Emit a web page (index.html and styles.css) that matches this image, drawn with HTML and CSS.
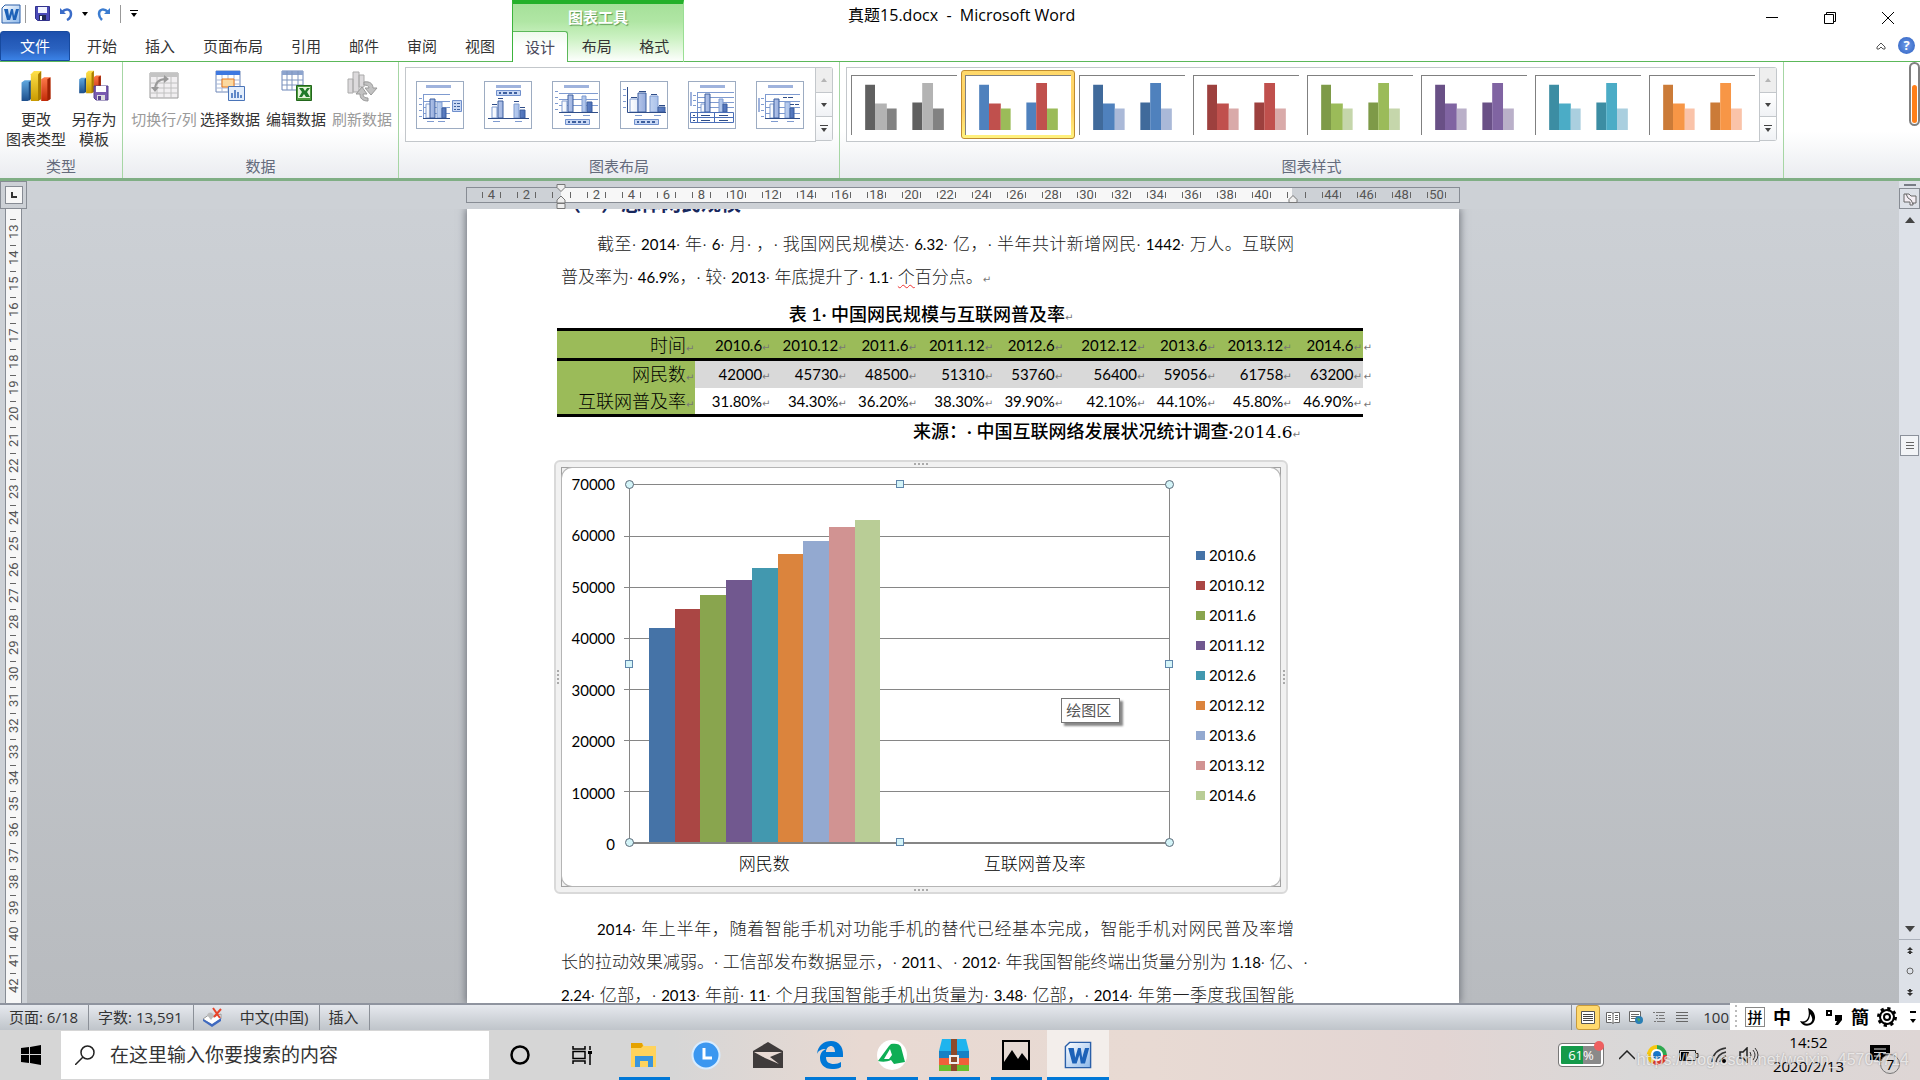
FILE: index.html
```html
<!DOCTYPE html>
<html lang="zh-CN">
<head>
  <meta charset="UTF-8">
  <meta name="viewport" content="width=device-width, initial-scale=1.0">
  <title>真题15.docx - Microsoft Word</title>
  <link rel="stylesheet" href="styles.css">
</head>
<body>

  <svg class="defs" width="0" height="0">
    <defs>
      <linearGradient id="gBlue" x2="0" y2="1"><stop offset="0" stop-color="#5fa8e0"/><stop offset="1" stop-color="#1d4f8c"/></linearGradient>
      <linearGradient id="gYellow" x2="0" y2="1"><stop offset="0" stop-color="#ffe14a"/><stop offset="1" stop-color="#c99a00"/></linearGradient>
      <linearGradient id="gRed" x2="0" y2="1"><stop offset="0" stop-color="#ff7a4a"/><stop offset="1" stop-color="#c22a08"/></linearGradient>
      <linearGradient id="gLight" x2="1"><stop offset="0" stop-color="#fff"/><stop offset="1" stop-color="#a9c1ea"/></linearGradient>
      <linearGradient id="gDark" x2="1"><stop offset="0" stop-color="#b4c5ea"/><stop offset="1" stop-color="#4a6fb8"/></linearGradient>
      <linearGradient id="gWord" x2="1" y2="1"><stop offset="0" stop-color="#fff"/><stop offset="1" stop-color="#8db8ea"/></linearGradient>
    </defs>
    <symbol id="bars" viewBox="0 0 106 60">
      <path fill="var(--a)" d="M13 9h10v46H13zM61 27h10v28H61z"/>
      <path fill="var(--b)" d="M23 28h12v27H23zM71 7h11v48H71z"/>
      <path fill="var(--c)" d="M35 33h10v22H35zM82 33h11v22H82z"/>
    </symbol>
    <symbol id="word" viewBox="0 0 20 20">
      <path d="M4 1h15v18H1V4z" fill="url(#gWord)" stroke="#2a5fa8" stroke-width="1"/>
      <path d="M3 5h4l1 7 2-7h2l1 7 2-7h3l-3 11h-3l-1-6-2 6H6z" fill="#1d62b8"/>
    </symbol>
    <symbol id="bars3d" viewBox="0 0 30 31">
      <path d="M1 12l3-2h6v18l-3 2H1z" fill="url(#gBlue)"/><path d="M8 12l2-2v18l-2 2z" fill="#1b4a80"/>
      <path d="M10 4l3-3h7v27l-3 2h-7z" fill="url(#gYellow)"/><path d="M17 4l3-3v27l-3 2z" fill="#a87c00"/>
      <path d="M20 9l3-2h6v21l-3 2h-6z" fill="url(#gRed)"/><path d="M26 9l3-2v21l-3 2z" fill="#9c2204"/>
    </symbol>
    <symbol id="legend" viewBox="0 0 25 6">
      <path d="M.5.5h24v5H.5z" fill="#c9d8f4" stroke="#6f8fcc"/><path d="M3 3h2m2 0h4m2 0h3m2 0h3" stroke="#3d5f9e" stroke-width="2"/>
    </symbol>
  </svg>

  <header class="header">
    <div class="header-left">
      <div class="quick-bar">
        <svg class="app-icon" width="20" height="20"><use href="#word"/></svg>
        <i class="quick-sep"></i>
        <button class="quick-btn" aria-label="保存"><svg width="15" height="15" viewBox="0 0 15 15"><path d="M.5.5h14v14h-12l-2-2z" fill="#4a4ab8" stroke="#32328c"/><path d="M3 1h9v6H3z" fill="#f2f4ff"/><path d="M4 9h7v5H4z" fill="#222a55"/><path d="M5 10h2v4H5z" fill="#fff"/></svg></button>
        <button class="quick-btn" aria-label="撤销"><svg width="14" height="14" viewBox="0 0 14 14"><path d="M1 1v6h6z" fill="#3b6cc8"/><path d="M3 5c4-4 9-3 9 2 0 3-2 5-4 6" fill="none" stroke="#3b6cc8" stroke-width="2.500"/></svg></button>
        <svg width="6" height="4" viewBox="0 0 6 4"><path d="M0 0h6L3 4z"/></svg>
        <button class="quick-btn" aria-label="恢复"><svg width="14" height="14" viewBox="0 0 14 14"><path d="M13 1v6H7z" fill="#3b7cd0"/><path d="M11 5C7 1 2 2 2 7c0 3 1 4 3 6" fill="none" stroke="#3b7cd0" stroke-width="2.500"/></svg></button>
        <i class="quick-sep"></i>
        <svg width="8" height="7" viewBox="0 0 8 7"><path d="M0 0h8v1H0zM1 3h6L4 7z"/></svg>
      </div>
      <nav class="tabs">
        <button class="tab file">文件</button>
        <button class="tab">开始</button>
        <button class="tab">插入</button>
        <button class="tab">页面布局</button>
        <button class="tab">引用</button>
        <button class="tab">邮件</button>
        <button class="tab">审阅</button>
        <button class="tab">视图</button>
      </nav>
    </div>
    <div class="context">
      <div class="context-title">图表工具</div>
      <div class="context-tabs">
        <button class="tab active">设计</button>
        <button class="tab">布局</button>
        <button class="tab">格式</button>
      </div>
    </div>
    <div class="header-right">
      <h1 class="title">真题15.docx&nbsp; -&nbsp; Microsoft Word</h1>
      <div class="window-side">
        <div class="window-buttons">
          <button aria-label="最小化"><svg width="12" height="12" viewBox="0 0 12 12"><path d="M0 5.500h12" stroke="#000"/></svg></button>
          <button aria-label="还原"><svg width="12" height="12" viewBox="0 0 12 12"><path d="M.5 2.500h9v9h-9zM2.500 2.500v-2h9v9h-2" fill="none" stroke="#000"/></svg></button>
          <button aria-label="关闭"><svg width="12" height="12" viewBox="0 0 12 12"><path d="M0 0l12 12M12 0L0 12" stroke="#000"/></svg></button>
        </div>
        <div class="help-buttons">
          <button aria-label="折叠功能区"><svg width="10" height="8" viewBox="0 0 10 8"><path d="M1 5l4-4 4 4v2H7L5 5 3 7H1z" fill="none" stroke="#555"/></svg></button>
          <button class="help" aria-label="帮助">?</button>
        </div>
      </div>
    </div>
  </header>

  <section class="ribbon">
    <div class="group">
      <div class="group-body">
        <button class="big"><svg width="32" height="32"><use href="#bars3d"/></svg>更改<br>图表类型</button>
        <button class="big narrow"><svg width="32" height="32" viewBox="0 0 32 32"><use href="#bars3d" width="24" height="24"/><path d="M16 16h14v14H18l-2-2z" fill="#7a5cb0" stroke="#54408c"/><path d="M18 16h10v6H18z" fill="#fff"/><path d="M19 25h8v5h-8z" fill="#ddd"/><path d="M20 26h3v4h-3z" fill="#54408c"/></svg>另存为<br>模板</button>
      </div>
      <div class="group-name">类型</div>
    </div>
    <div class="group">
      <div class="group-body">
        <button class="big" disabled><svg width="32" height="32" viewBox="0 0 32 32"><path d="M2 3h28v25H2z" fill="#f1eff1" stroke="#999"/><path d="M2 3h28v4H2z" fill="#c4c4c4"/><path d="M2 13h28M2 18h28M2 23h28M9 7v21M16 7v21M23 7v21" stroke="#c0c0c0"/><path d="M7 20C7 13 11 9 18 9" fill="none" stroke="#999" stroke-width="2"/><path d="M16 5l5 4-5 4zM3 17l4 5 4-5z" fill="#999"/></svg>切换行/列</button>
        <button class="big"><svg width="32" height="32" viewBox="0 0 32 32"><path d="M2 1h24v21H2z" fill="#fff" stroke="#6d86b8"/><path d="M2 1h24v4H2z" fill="#3e78e0"/><path d="M2 10h24M2 14h24M2 18h24M8 5v17M14 5v17M20 5v17" stroke="#a9b8d6"/><path d="M8 9h12v8H8z" fill="#fbd9a0" stroke="#e8791c" stroke-width="1"/><path d="M14.500 16.500h16v14h-16z" fill="#e3eefc" stroke="#4a74b8"/><path d="M18 23v5m3-8v8m3-6v6m3-3v3" stroke="#5f88c8" stroke-width="2"/></svg>选择数据</button>
        <button class="big"><svg width="32" height="32" viewBox="0 0 32 32"><path d="M2 1h21v19H2z" fill="#fff" stroke="#6d86b8"/><path d="M2 1h21v4H2z" fill="#8da4ce"/><path d="M2 10h21M2 15h21M7 1v19M12 1v19M18 1v19" stroke="#7f95be"/><path d="M16.500 15.500h15v15h-15z" fill="#4b9a3c" stroke="#22661c"/><path d="M18 17h12v11H18z" fill="#e6f4dc"/><path d="M19 18h4l2 3 2-3h3l-3 4 3 5h-4l-2-3-2 3h-3l3-5z" fill="#1f7a28"/></svg>编辑数据</button>
        <button class="big" disabled><svg width="32" height="32" viewBox="0 0 32 32"><path d="M2 9h5v14H2zM7 2h6v20H7zM13 5h5v12h-5z" fill="#dcdadc" stroke="#aaa"/><path d="M18 12c6-1 9 2 9 6h4l-6 7-6-7h4c0-2-2-3-5-3z" fill="#c2c2c2" stroke="#999"/><path d="M22 31c-6 0-8-3-8-7h-4l6-7 5 7h-4c0 3 2 4 5 4z" fill="#c2c2c2" stroke="#999"/></svg>刷新数据</button>
      </div>
      <div class="group-name">数据</div>
    </div>
    <div class="group">
      <div class="group-body">
        <div class="gallery layouts">
          <button class="layout" aria-label="布局 1"><svg width="46" height="46" viewBox="1 1 46 46"><path d="M10 4h25v3H10z" fill="#9fb3dd"/><path d="M7 13.500h27M7 20.500h27M7 26.500h27M7 32.500h27M7.500 13v24M3 17.500h3m-3 6h3m-3 6h3m-3 6h3M11 40.500h7m4 0h7" stroke="#7f9bd0"/><path d="M10 23h5v14h-5zM21 21h5v16h-5z" fill="url(#gLight)" stroke="#7f9bd0"/><path d="M14 18h5v19h-5zM26 27h4v10h-4z" fill="url(#gDark)" stroke="#3d5f9e"/><path d="M7 37.500h27" stroke="#2f4d88"/><path d="M36.500 19.500h9v11h-9z" fill="#c9d8f4" stroke="#6f8fcc"/><path d="M38 22.500h2m1 0h3m-6 3h2m1 0h3m-6 3h2m1 0h3" stroke="#3d5f9e"/></svg></button>
          <button class="layout" aria-label="布局 2"><svg width="46" height="46" viewBox="1 1 46 46"><path d="M12 4h25v3H12z" fill="#9fb3dd"/><use href="#legend" x="12" y="9" width="25" height="6"/><path d="M8 26h5v11H8zM30 23h5v14h-5z" fill="url(#gLight)" stroke="#7f9bd0"/><path d="M14 20h5v17h-5zM36 29h5v8h-5z" fill="url(#gDark)" stroke="#3d5f9e"/><path d="M4 37.500h41M8 23.500h5m1-6h5m11 3h5m1 6h5" stroke="#2f4d88"/><path d="M9 40.500h7m15 0h7" stroke="#7f9bd0"/></svg></button>
          <button class="layout" aria-label="布局 3"><svg width="46" height="46" viewBox="1 1 46 46"><path d="M12 4h25v3H12z" fill="#9fb3dd"/><path d="M7 12.500h39M7 18.500h39M7 24.500h39M3 10.500h3m-3 6h3m-3 6h3m-3 6h3M12 34.500h7m12 0h7" stroke="#7f9bd0"/><path d="M10 20h5v11h-5zM30 15h4v16h-4z" fill="url(#gLight)" stroke="#7f9bd0"/><path d="M16 14h5v17h-5zM35 21h5v10h-5z" fill="url(#gDark)" stroke="#3d5f9e"/><path d="M7 31.500h39" stroke="#2f4d88"/><use href="#legend" x="13" y="38" width="25" height="6"/></svg></button>
          <button class="layout" aria-label="布局 4"><svg width="46" height="46" viewBox="1 1 46 46"><path d="M3 8.500h3m-3 6h3m-3 6h3m-3 6h3M15 34.500h7m12 0h7" stroke="#7f9bd0"/><path d="M10 18h8v13h-8zM30 15h8v16h-8z" fill="url(#gLight)" stroke="#7f9bd0"/><path d="M18 12h8v19h-8zM38 26h7v5h-7z" fill="url(#gDark)" stroke="#3d5f9e"/><path d="M7.500 6v25.500H46M11 16.500h6m2-6h7m5 3h6m2 11h6" fill="none" stroke="#2f4d88"/><use href="#legend" x="14" y="38" width="25" height="6"/></svg></button>
          <button class="layout" aria-label="布局 5"><svg width="46" height="46" viewBox="1 1 46 46"><path d="M12 4h25v3H12zM2 11h2v14H2z" fill="#9fb3dd"/><path d="M9 11.500h37M9 16.500h37M9 21.500h37M9 26.500h37M9.500 11v20M5 14.500h3m-3 5h3m-3 5h3" stroke="#7f9bd0"/><path d="M13 23h4v8h-4zM31 18h4v13h-4z" fill="url(#gLight)" stroke="#7f9bd0"/><path d="M17 13h5v18h-5zM35 23h4v8h-4z" fill="url(#gDark)" stroke="#3d5f9e"/><path d="M2.500 31.500h43v10h-43zM2 36.500h44M9.500 31v10M26.500 31v10" fill="none" stroke="#4a6fb8"/><path d="M13 34.500h9m9 0h9M13 39.500h9m9 0h9M5 34.500h2m-2 5h2" stroke="#2f4d88"/></svg></button>
          <button class="layout" aria-label="布局 6"><svg width="46" height="46" viewBox="1 1 46 46"><path d="M12 4h25v3H12zM2 17h2v14H2z" fill="#9fb3dd"/><path d="M9 13.500h35M9 20.500h35M9 26.500h35M9 32.500h35M9.500 13v24M5 17.500h3m-3 6h3m-3 6h3m-3 6h3M15 40.500h7m9 0h7" stroke="#7f9bd0"/><path d="M14 23h4v14h-4zM29 21h5v16h-5z" fill="url(#gLight)" stroke="#7f9bd0"/><path d="M18 18h5v19h-5zM34 27h4v10h-4z" fill="url(#gDark)" stroke="#3d5f9e"/><path d="M9 37.500h35M27 16.500h4m1 0h5m-3 7h4m1 0h4" stroke="#2f4d88"/></svg></button>
        </div>
        <div class="gallery-scroll">
          <button disabled aria-label="上一行"><svg width="6" height="4" viewBox="0 0 6 4"><path d="M0 4h6L3 0z" fill="#b5b5b5"/></svg></button>
          <button aria-label="下一行"><svg width="6" height="4" viewBox="0 0 6 4"><path d="M0 0h6L3 4z" fill="#444"/></svg></button>
          <button aria-label="其他"><svg width="8" height="7" viewBox="0 0 8 7"><path d="M0 0h8v1H0zM1 3h6L4 7z" fill="#444"/></svg></button>
        </div>
      </div>
      <div class="group-name">图表布局</div>
    </div>
    <div class="group">
      <div class="group-body">
        <div class="gallery">
          <button class="style gray" aria-label="样式 1"><svg><use href="#bars"/></svg></button>
          <button class="style mixed selected" aria-label="样式 2"><svg><use href="#bars"/></svg></button>
          <button class="style blue" aria-label="样式 3"><svg><use href="#bars"/></svg></button>
          <button class="style red" aria-label="样式 4"><svg><use href="#bars"/></svg></button>
          <button class="style green" aria-label="样式 5"><svg><use href="#bars"/></svg></button>
          <button class="style purple" aria-label="样式 6"><svg><use href="#bars"/></svg></button>
          <button class="style teal" aria-label="样式 7"><svg><use href="#bars"/></svg></button>
          <button class="style orange" aria-label="样式 8"><svg><use href="#bars"/></svg></button>
        </div>
        <div class="gallery-scroll">
          <button disabled aria-label="上一行"><svg width="6" height="4" viewBox="0 0 6 4"><path d="M0 4h6L3 0z" fill="#b5b5b5"/></svg></button>
          <button aria-label="下一行"><svg width="6" height="4" viewBox="0 0 6 4"><path d="M0 0h6L3 4z" fill="#444"/></svg></button>
          <button aria-label="其他"><svg width="8" height="7" viewBox="0 0 8 7"><path d="M0 0h8v1H0zM1 3h6L4 7z" fill="#444"/></svg></button>
        </div>
      </div>
      <div class="group-name">图表样式</div>
    </div>
    <div class="level"><i></i></div>
  </section>

  <main class="workspace">
    <div class="ruler-corner"><button aria-label="制表符"><svg width="6" height="6" viewBox="0 0 6 6"><path d="M1 0v5h5" fill="none" stroke="#333" stroke-width="2"/></svg></button></div>
    <div class="ruler-row">
      <div class="ruler">
        <span>4</span><span>2</span><span></span><span>2</span><span>4</span><span>6</span><span>8</span><span>10</span><span>12</span><span>14</span><span>16</span><span>18</span><span>20</span><span>22</span><span>24</span><span>26</span><span>28</span><span>30</span><span>32</span><span>34</span><span>36</span><span>38</span><span>40</span><span></span><span>44</span><span>46</span><span>48</span><span>50</span>
        <svg class="indent-left" width="10" height="26" viewBox="0 0 10 26"><path d="M1 1.500h8v3l-4 4-4-4zM1 20v-3l4-4 4 4v3zM1 20.500h8v5H1z" fill="#eee" stroke="#777"/></svg>
        <svg class="indent-right" width="10" height="9" viewBox="0 0 10 9"><path d="M1 8.500v-3l4-4 4 4v3z" fill="#eee" stroke="#777"/></svg>
      </div>
    </div>
    <div class="ruler-side">
      <div class="vruler">
        <span>13</span><span>14</span><span>15</span><span>16</span><span>17</span><span>18</span><span>19</span><span>20</span><span>21</span><span>22</span><span>23</span><span>24</span><span>25</span><span>26</span><span>27</span><span>28</span><span>29</span><span>30</span><span>31</span><span>32</span><span>33</span><span>34</span><span>35</span><span>36</span><span>37</span><span>38</span><span>39</span><span>40</span><span>41</span><span>42</span>
      </div>
    </div>

    <div class="canvas">
      <article class="page">
        <h2 class="heading">（一）总体网民规模</h2>
        <p class="para">
          <span class="line first">截至· <b>2014</b>· 年· <b>6</b>· 月· ，· 我国网民规模达· <b>6.32</b>· 亿，· 半年共计新增网民· <b>1442</b>· 万人。互联网</span>
          <span class="line last">普及率为· <b>46.9%</b>，· 较· <b>2013</b>· 年底提升了· <b>1.1</b>· <u>个</u>百分点。<i class="mark"></i></span>
        </p>

        <table class="data">
          <caption>表 1· 中国网民规模与互联网普及率<i class="mark"></i></caption>
          <colgroup><col class="name"><col class="mid"><col class="mid"><col class="slim"><col class="mid"><col class="slim"><col class="wide"><col class="slim"><col class="mid"><col class="slim"><col class="tail"></colgroup>
          <thead>
            <tr><th class="mark">时间</th><th class="mark">2010.6</th><th class="mark">2010.12</th><th class="mark">2011.6</th><th class="mark">2011.12</th><th class="mark">2012.6</th><th class="mark">2012.12</th><th class="mark">2013.6</th><th class="mark">2013.12</th><th class="mark">2014.6</th><td class="mark row-end"></td></tr>
          </thead>
          <tbody>
            <tr class="shaded"><th class="mark">网民数</th><td class="mark">42000</td><td class="mark">45730</td><td class="mark">48500</td><td class="mark">51310</td><td class="mark">53760</td><td class="mark">56400</td><td class="mark">59056</td><td class="mark">61758</td><td class="mark">63200</td><td class="mark row-end"></td></tr>
            <tr><th class="mark">互联网普及率</th><td class="mark">31.80%</td><td class="mark">34.30%</td><td class="mark">36.20%</td><td class="mark">38.30%</td><td class="mark">39.90%</td><td class="mark">42.10%</td><td class="mark">44.10%</td><td class="mark">45.80%</td><td class="mark">46.90%</td><td class="mark row-end"></td></tr>
          </tbody>
        </table>
        <p class="source">来源：· 中国互联网络发展状况统计调查·<span>2014.6</span><i class="mark"></i></p>

        <div class="chart-frame">
          <i class="grip top"></i><i class="grip bottom"></i><i class="grip left"></i><i class="grip right"></i>
          <div class="chart-border">
            <div class="chart">
              <div class="axis"><span>70000</span><span>60000</span><span>50000</span><span>40000</span><span>30000</span><span>20000</span><span>10000</span><span>0</span></div>
              <div class="plot">
                <div class="gridlines"><i></i><i></i><i></i><i></i><i></i><i></i><i></i></div>
                <div class="series">
                  <div class="columns">
                    <i class="c1" style="height: 60%"></i>
                    <i class="c2" style="height: 65.300%"></i>
                    <i class="c3" style="height: 69.300%"></i>
                    <i class="c4" style="height: 73.300%"></i>
                    <i class="c5" style="height: 76.800%"></i>
                    <i class="c6" style="height: 80.600%"></i>
                    <i class="c7" style="height: 84.400%"></i>
                    <i class="c8" style="height: 88.200%"></i>
                    <i class="c9" style="height: 90.300%"></i>
                  </div>
                  <div class="columns"></div>
                </div>
                <i class="handle round n w"></i><i class="handle n"></i><i class="handle round n e"></i>
                <i class="handle w"></i><i class="handle e"></i>
                <i class="handle round s w"></i><i class="handle s"></i><i class="handle round s e"></i>
                <div class="tip">绘图区</div>
              </div>
              <ul class="legend">
                <li><i class="c1"></i>2010.6</li>
                <li><i class="c2"></i>2010.12</li>
                <li><i class="c3"></i>2011.6</li>
                <li><i class="c4"></i>2011.12</li>
                <li><i class="c5"></i>2012.6</li>
                <li><i class="c6"></i>2012.12</li>
                <li><i class="c7"></i>2013.6</li>
                <li><i class="c8"></i>2013.12</li>
                <li><i class="c9"></i>2014.6</li>
              </ul>
              <div class="categories"><span>网民数</span><span>互联网普及率</span></div>
            </div>
          </div>
        </div>

        <p class="para after">
          <span class="line first"><b>2014</b>· 年上半年，随着智能手机对功能手机的替代已经基本完成，智能手机对网民普及率增</span>
          <span class="line">长的拉动效果减弱。· 工信部发布数据显示，· <b>2011</b>、· <b>2012</b>· 年我国智能终端出货量分别为 <b>1.18</b>· 亿、·</span>
          <span class="line"><b>2.24</b>· 亿部，· <b>2013</b>· 年前· <b>11</b>· <u>个月我国</u>智能手机出货量为· <b>3.48</b>· 亿部，· <b>2014</b>· 年第一季度我国智能</span>
        </p>
      </article>
    </div>

    <div class="scrollbar">
      <i class="split"></i>
      <button class="ruler-toggle" aria-label="标尺"><svg width="14" height="14" viewBox="0 0 14 14"><path d="M1 2h5l2 2h5v7h-3v2H7v-3H1z" fill="#f4eef4" stroke="#666"/><path d="M3 2l2 4 3 2 2 4" fill="none" stroke="#666"/></svg></button>
      <button aria-label="向上"><svg width="10" height="6" viewBox="0 0 10 6"><path d="M0 6h10L5 0z" fill="#444"/></svg></button>
      <div class="track"><button class="thumb" aria-label="滑块"><svg width="8" height="7" viewBox="0 0 8 7"><path d="M0 .5h8M0 3.500h8M0 6.500h8" stroke="#666"/></svg></button></div>
      <button aria-label="向下"><svg width="10" height="6" viewBox="0 0 10 6"><path d="M0 0h10L5 6z" fill="#444"/></svg></button>
      <div class="browse">
        <button aria-label="上一页"><svg width="6" height="7" viewBox="0 0 6 7"><path d="M0 3h6L3 0zM0 6h6L3 3zM2 6h2v1H2z" fill="#333"/></svg></button>
        <button aria-label="选择浏览对象"><svg width="8" height="8" viewBox="0 0 8 8"><circle cx="4" cy="4" r="3" fill="none" stroke="#666"/></svg></button>
        <button aria-label="下一页"><svg width="6" height="7" viewBox="0 0 6 7"><path d="M0 1h6L3 4zM0 4h6L3 7zM2 0h2v1H2z" fill="#333"/></svg></button>
      </div>
    </div>
  </main>

  <footer class="status">
    <button>页面: 6/18</button>
    <button>字数: 13,591</button>
    <button class="lang"><svg width="20" height="20" viewBox="0 0 20 20"><path d="M0 12l7-5 3 3 8-3v5l-9 6z" fill="#fff" stroke="#999"/><path d="M0 12l9 5 9-6v3l-9 6-9-6z" fill="#3f6ac0"/><path d="M4 8c2-4 6-3 7 1l-3 4z" fill="#bbb"/><path d="M10 1l7 10M18 2l-7 8" stroke="#e8442a" stroke-width="2"/></svg>中文(中国)</button>
    <button>插入</button>
    <div class="views">
      <button class="on" aria-label="页面视图"><svg width="14" height="13" viewBox="0 0 14 13"><path d="M.5.500h13v12H.5z" fill="#fff" stroke="#555"/><path d="M2 3.500h10M2 5.500h10M2 7.500h10M2 9.500h10" stroke="#444"/></svg></button>
      <button aria-label="阅读版式"><svg width="14" height="13" viewBox="0 0 14 13"><path d="M.5 1.500h5l1.500 1 1.500-1h5v10h-5l-1.500 1-1.500-1h-5zM7 2v10" fill="#fff" stroke="#666"/><path d="M2 4.500h3m-3 2h3m-3 2h3m4-4h3m-3 2h3m-3 2h3" stroke="#666"/></svg></button>
      <button aria-label="Web 版式"><svg width="14" height="13" viewBox="0 0 14 13"><path d="M.5.500h11v10H.5z" fill="#fff" stroke="#666"/><path d="M2 3.500h8M2 5.500h8M2 7.500h5" stroke="#666"/><circle cx="10" cy="9" r="4" fill="#2a7fb5"/><path d="M8 7l3 1-1 3z" fill="#4caf50"/></svg></button>
      <button aria-label="大纲视图"><svg width="14" height="13" viewBox="0 0 14 13"><path d="M1 1.500h2m1 0h9M4 4.500h2m1 0h5M4 7.500h2m1 0h6M2 10.500h2m1 0h8" stroke="#777"/></svg></button>
      <button aria-label="草稿"><svg width="14" height="13" viewBox="0 0 14 13"><path d="M1 1.500h12M1 4.500h12M1 7.500h12M1 10.500h12" stroke="#666"/></svg></button>
      <span class="zoom">100</span>
    </div>
    <div class="ime">
      <i class="ime-grip"></i>
      <button class="boxed">拼</button>
      <button>中</button>
      <button aria-label="半角"><svg width="18" height="18" viewBox="0 0 18 18"><path d="M9 0c8 3 9 12 4 16-4 3-10 2-12-3 5 2 11-2 8-13z"/><path d="M11 6c3 4 3 7 0 9-2 1-4 1-6 0 4-1 6-4 6-9z" fill="#fff"/></svg></button>
      <button aria-label="标点"><svg width="18" height="18" viewBox="0 0 18 18"><path d="M2 3h4v4H2z" fill="none" stroke="#000" stroke-width="2"/><path d="M10 7h7v5l-4 5h-3l2-4h-2z"/></svg></button>
      <button>簡</button>
      <button aria-label="设置"><svg width="20" height="20" viewBox="0 0 20 20"><circle cx="10" cy="10" r="7" fill="none" stroke="#000" stroke-width="2"/><circle cx="10" cy="10" r="8" fill="none" stroke="#000" stroke-width="4" stroke-dasharray="3 3.280"/><circle cx="10" cy="10" r="3" fill="none" stroke="#000" stroke-width="2"/></svg></button>
      <button class="ime-more" aria-label="更多"><svg width="6" height="12" viewBox="0 0 6 12"><path d="M0 0h6v2H0zM0 8h6l-3 4z"/></svg></button>
    </div>
  </footer>

  <div class="taskbar">
    <button class="start" aria-label="开始"><svg width="20" height="20" viewBox="0 0 20 20"><path d="M0 3l8-1v7H0zM9 2l11-2v9H9zM0 10h8v8l-8-1zM9 10h11v10L9 18z"/></svg></button>
    <label class="search">
      <svg width="20" height="20" viewBox="0 0 20 20"><circle cx="12.500" cy="7.500" r="6.500" fill="none" stroke="#222" stroke-width="1.500"/><path d="M8 12l-8 8" stroke="#222" stroke-width="1.500"/></svg>
      <input type="text" placeholder="在这里输入你要搜索的内容" aria-label="搜索">
    </label>
    <button class="task" aria-label="Cortana"><svg width="20" height="20" viewBox="0 0 20 20"><circle cx="10" cy="10" r="8.500" fill="none" stroke="#000" stroke-width="2.500"/></svg></button>
    <button class="task" aria-label="任务视图"><svg width="20" height="20" viewBox="0 0 20 20"><path d="M1 1v3h12V1M1 19v-3h12v3M1 6.500h12v7H1zM18 1v4M18 9v11" fill="none" stroke="#000" stroke-width="1.500"/><path d="M16 6h4v3h-4z"/></svg></button>
    <button class="task open" aria-label="资源管理器"><svg width="28" height="28" viewBox="0 0 28 28"><path d="M1 2h11l2 3h12v21H1z" fill="#ffd35c"/><path d="M1 2h11l1 3-2 2H1z" fill="#e5a200"/><path d="M5 26V15h18v11h-5v-6h-8v6z" fill="#3a96dd"/></svg></button>
    <button class="task" aria-label="时钟"><svg width="30" height="30" viewBox="0 0 30 30"><circle cx="15" cy="15" r="13.500" fill="#3b97f0" stroke="#d8ecff" stroke-width="2"/><path d="M13 8v10h8" fill="none" stroke="#fff" stroke-width="3"/></svg></button>
    <button class="task" aria-label="邮件"><svg width="30" height="26" viewBox="0 0 30 26"><path d="M0 9L15 0l15 9v17H0z" fill="#3f3b3b"/><path d="M1 10h28l-12 5 9 7-14-6z" fill="#e8dad4"/></svg></button>
    <button class="task open" aria-label="Edge"><svg width="28" height="30" viewBox="0 0 28 30"><path d="M1 14C2 5 8 1 15 1c8 0 12 6 12 13v3H10c0 5 3 7 8 7 3 0 5-1 7-2v5c-3 2-6 2-9 2-8 0-12-5-12-11 0-5 3-8 6-9-5 0-8 2-9 5zm9-2h9c0-4-2-6-4-6s-5 2-5 6z" fill="#0078d7"/></svg></button>
    <button class="task open" aria-label="浏览器"><svg width="30" height="32" viewBox="0 0 30 32"><circle cx="15" cy="16" r="15" fill="#fff"/><path d="M14 5c5-1 9 0 10 3l4 15-11 2-3-4c-4 2-9 2-13 1L12 7z" fill="#0fae55"/><path d="M13 10L7 20h5l3-4z" fill="#fff"/></svg></button>
    <button class="task open" aria-label="压缩"><svg width="30" height="32" viewBox="0 0 30 32"><path d="M3 0h24l3 12H0z" fill="#1fb4ee"/><path d="M0 12h30v8H0z" fill="#1681c4"/><path d="M0 19h30v7H0z" fill="#f0603a"/><path d="M0 26h30v6H0z" fill="#6abf2e"/><path d="M12 0h6v32h-6z" fill="#8d4a2a"/><path d="M11 17h8v7h-8z" fill="none" stroke="#eee" stroke-width="2"/></svg></button>
    <button class="task open" aria-label="照片"><svg width="28" height="30" viewBox="0 0 28 30"><path d="M1 1h26v28H1z" fill="#e5d9d2" stroke="#000" stroke-width="2"/><path d="M2 22l8-12 6 9 4-6 7 9v7H2z"/></svg></button>
    <button class="task open current" aria-label="Word"><svg width="28" height="30"><use href="#word"/></svg></button>

    <div class="tray">
      <div class="power"><span>61%</span><i></i></div>
      <svg width="16" height="10" viewBox="0 0 16 10"><path d="M0 9l8-8 8 8" fill="none" stroke="#222" stroke-width="1.500"/></svg>
      <svg width="20" height="20" viewBox="0 0 20 20"><circle cx="10" cy="10" r="9.500" fill="#fff"/><path d="M10 2a8 8 0 0 1 8 8" fill="none" stroke="#2fa84f" stroke-width="4"/><path d="M18 10a8 8 0 0 1-12 7" fill="none" stroke="#e33b2e" stroke-width="4"/><path d="M6 17A8 8 0 0 1 10 2" fill="none" stroke="#f9c80e" stroke-width="4"/><circle cx="10" cy="10" r="4" fill="#1877c9"/></svg>
      <svg width="20" height="13" viewBox="0 0 20 13"><path d="M.5 1.500h16v10H.5zM17 4.500h2v4h-2" fill="none" stroke="#222"/><path d="M2 3h8l-3 8H2z"/></svg>
      <svg width="16" height="16" viewBox="0 0 16 16"><path d="M1 15C2 7 7 2 15 1M5 15c1-5 5-9 10-10M9 15c1-3 3-5 6-6" fill="none" stroke="#333" stroke-width="1.500"/><circle cx="13" cy="14" r="2"/></svg>
      <svg width="20" height="16" viewBox="0 0 20 16"><path d="M1 5h3l4-4v14l-4-4H1z" fill="none" stroke="#222" stroke-width="1.500"/><path d="M11 5q2 3 0 6M14 3q4 5 0 10M16 1q6 7 0 14" fill="none" stroke="#333"/></svg>
      <div class="clock"><span>14:52</span><span>2020/2/13</span></div>
      <div class="notice"><svg width="20" height="20" viewBox="0 0 20 20"><path d="M0 0h20v15h-7v5l-5-5H0z"/><path d="M4 4h12M4 7.500h12M4 11h7" stroke="#ddd"/></svg><span>7</span></div>
    </div>
    <div class="watermark">https://blog.csdn.net/weixin_45704714</div>
  </div>

</body>
</html>
```
FILE: styles.css
```css
* {
  box-sizing: border-box;
  margin: 0;
  padding: 0;
}

:root {
  --ui: "Open Sans", "Noto Sans CJK SC", sans-serif;
  --doc: Lato, "Noto Sans CJK SC", sans-serif;
  --page: 992px;
}

body {
  display: flex;
  flex-direction: column;
  height: 100vh;
  overflow: hidden;
  font-family: var(--ui);
  font-size: 15px;
  color: #333;
  background: #fff;
}

button {
  font: inherit;
  color: inherit;
  background: none;
  border: none;
}

i, u {
  font-style: normal;
}

svg {
  display: block;
  flex: none;
}

.defs {
  position: absolute;
}

/* title bar and tabs */
.header {
  display: flex;
  height: 62px;
  border-bottom: 1px solid #5cb85a;
}

.header-left {
  display: flex;
  flex-direction: column;
  justify-content: space-between;
}

.quick-bar {
  display: flex;
  align-items: center;
  gap: 9px;
  height: 27px;
  padding-left: 1px;
}

.quick-btn {
  display: flex;
}

.quick-sep {
  width: 1px;
  height: 18px;
  background: #999;
}

.quick-sep:nth-child(2) {
  margin-left: -5px;
}

.tabs, .context-tabs {
  display: flex;
  height: 30px;
}

.tab {
  padding: 0 14px;
  line-height: 30px;
  white-space: nowrap;
}

.file {
  width: 70px;
  margin-right: 3px;
  color: #fff;
  background: linear-gradient(#1d50ad, #2a62c0 60%, #3b82e6);
  border: 1px solid #174a9f;
  border-radius: 3px 3px 0 0;
  line-height: 28px;
}

.context {
  display: flex;
  flex-direction: column;
  margin-left: 3px;
  width: 172px;
  height: 62px;
  background: linear-gradient(#a6e09a, #b0e6a4 30%, #cdf2c4 60%, #fff);
  border-top: 4px solid #24b02a;
  border-left: 1px solid #3cb43c;
  border-right: 1px solid #9adf94;
}

.context-title {
  height: 27px;
  line-height: 27px;
  text-align: center;
  color: #fff;
  font-weight: 700;
  text-shadow: 1px 1px 1px #5a9a52;
}

.context-tabs {
  height: 31px;
  border-bottom: 1px solid #5cb85a;
}

.context .tab {
  flex: 1;
  padding: 0;
}

.context .active {
  flex: none;
  width: 55px;
  height: 31px;
  color: #4a4a5c;
  background: linear-gradient(#eefaec, #fff 50%);
  border: 1px solid #5cb85a;
  border-bottom: none;
  border-left: none;
  border-radius: 0 3px 0 0;
}

.header-right {
  display: flex;
  flex: 1;
  justify-content: space-between;
}

.title {
  padding: 4px 0 0 164px;
  font-size: 16px;
  font-weight: 400;
  line-height: 22px;
  color: #000;
}

.window-side {
  display: flex;
  flex-direction: column;
  justify-content: space-between;
  align-items: flex-end;
}

.window-buttons {
  display: flex;
  gap: 46px;
  padding: 12px 26px 0 0;
}

.help-buttons {
  display: flex;
  align-items: center;
  gap: 12px;
  padding: 0 5px 7px 0;
}

.help {
  width: 17px;
  height: 17px;
  border-radius: 50%;
  background: radial-gradient(#6f9be8, #2c5fc0);
  color: #fff;
  font-size: 13px;
  font-weight: 700;
  line-height: 17px;
}

/* ribbon */
.ribbon {
  position: relative;
  display: flex;
  height: 119px;
  background: linear-gradient(#fff 60%, #eaecf0);
  border-bottom: 3px solid #7fae84;
}

.group {
  display: flex;
  flex-direction: column;
  justify-content: space-between;
  padding: 5px 6px 2px;
  border-right: 1px solid #a6d6a4;
}

.group:first-child, .group:nth-child(2) {
  padding: 5px 3px 2px;
}

.group-body {
  display: flex;
  height: 86px;
}

.group-name {
  text-align: center;
  line-height: 20px;
  color: #646b7c;
}

.big {
  display: flex;
  flex-direction: column;
  align-items: center;
  width: 66px;
  padding-top: 3px;
  line-height: 20px;
  white-space: nowrap;
}

.big svg {
  margin-bottom: 7px;
}

.big:disabled {
  color: #9a9a9a;
}

.narrow {
  width: 50px;
}

.group:nth-child(2) .group-body {
  padding: 0 0 0 5px;
}

.gallery {
  display: flex;
  align-items: center;
  height: 75px;
  background: #fff;
  border: 1px solid #c3c7cb;
}

.layouts {
  gap: 20px;
  padding: 0 11px 0 10px;
}

.layout {
  width: 48px;
  height: 48px;
  border: 1px solid #9dacc2;
}

.gallery-scroll {
  display: grid;
  grid-template-rows: 1fr 1fr 1fr;
  width: 17px;
  height: 74px;
  border: 1px solid #c3c7cb;
  border-left: none;
  border-radius: 0 3px 3px 0;
}

.gallery-scroll button {
  display: flex;
  justify-content: center;
  align-items: center;
  background: linear-gradient(#fff, #f0f2f5);
}

.gallery-scroll button + button {
  border-top: 1px solid #c3c7cb;
}

.gallery-scroll button:disabled {
  background: #eee;
}

.style {
  width: 114px;
  height: 69px;
  padding: 4px;
  border-radius: 3px;
}

.style svg {
  width: 106px;
  height: 60px;
  background: #fff;
  border-top: 1px solid #808080;
  border-left: 1px solid #808080;
}

.selected {
  background: linear-gradient(#ffd96a, #ffd065 60%, #fff27e);
  border: 1px solid #c08c30;
  padding: 3px;
}

.gray { --a: #606060; --b: #b3b3b3; --c: #828282; }
.mixed { --a: #4f81bd; --b: #c0504d; --c: #9bbb59; }
.blue { --a: #406a9b; --b: #4f81bd; --c: #aab9d8; }
.red { --a: #9d403e; --b: #c0504d; --c: #d9aaa9; }
.green { --a: #7e9a48; --b: #9bbb59; --c: #c5d6ab; }
.purple { --a: #695086; --b: #8064a2; --c: #bab0c9; }
.teal { --a: #3c8da3; --b: #4bacc6; --c: #aacfdf; }
.orange { --a: #cb7b38; --b: #f79646; --c: #fac3a9; }

.level {
  position: absolute;
  right: 0;
  top: 0;
  display: flex;
  align-items: flex-end;
  width: 11px;
  height: 64px;
  padding: 1px;
  background: #fff;
  border: 2px solid #808080;
  border-radius: 6px;
}

.level i {
  width: 5px;
  height: 38px;
  border-radius: 3px;
  background: #ff7f1a;
}

/* document area */
.workspace {
  display: grid;
  flex: 1;
  grid-template-columns: 27px minmax(0, 1fr) 21px;
  grid-template-rows: 28px minmax(0, 1fr);
  min-height: 0;
  background: linear-gradient(#cdd1d6, #b8bbbf);
}

.ruler-corner {
  display: flex;
  justify-content: center;
  align-items: center;
  border: 1px solid #878c94;
}

.ruler-corner button {
  display: flex;
  justify-content: center;
  align-items: center;
  width: 18px;
  height: 18px;
  background: #f7f7f7;
  border: 1px solid #878c94;
}

.ruler-row {
  background: #cdd1d6;
}

.ruler {
  position: relative;
  z-index: 1;
  display: flex;
  width: calc(var(--page) + 2px);
  height: 16px;
  margin: 6px auto;
  padding-left: 7px;
  font-family: Roboto, sans-serif;
  font-size: 13px;
  line-height: 14px;
  color: #555;
  background: linear-gradient(to right, transparent 94px, #f7f7f7 94px calc(100% - 167px), transparent calc(100% - 167px));
  border: 1px solid #878c94;
}

.ruler span {
  width: 35px;
  text-align: center;
  background: linear-gradient(#666, #666) 8px 4px / 1px 6px no-repeat, linear-gradient(#666, #666) 26px 4px / 1px 6px no-repeat;
}

.indent-left {
  position: absolute;
  left: 89px;
  top: -5px;
}

.indent-right {
  position: absolute;
  right: 161px;
  bottom: -1px;
}

.ruler-side {
  padding-left: 5px;
  background: #cdd1d6;
  overflow: hidden;
}

.vruler {
  display: flex;
  flex-direction: column;
  align-items: center;
  width: 17px;
  min-height: 100%;
  padding-top: 10px;
  background: #f7f7f7;
  border: solid #878c94;
  border-width: 0 1px;
}

.vruler span {
  flex: none;
  height: 26px;
  width: 15px;
  writing-mode: vertical-rl;
  transform: rotate(180deg);
  text-align: center;
  font-family: Roboto, sans-serif;
  font-size: 13px;
  line-height: 15px;
  color: #555;
  background: linear-gradient(#666, #666) 5px 25px / 6px 1px no-repeat;
}

.canvas {
  overflow: hidden;
}

.page {
  display: flow-root;
  width: var(--page);
  height: 100%;
  margin: 0 auto;
  padding: 0 165px 0 94px;
  background: #fff;
  box-shadow: 0 0 8px 1px #6c7078;
  font-family: var(--doc);
  color: #000;
  text-spacing-trim: space-all;
}

.heading {
  margin-top: -16px;
  font-size: 20px;
  line-height: 20px;
  color: #17285e;
}

.para {
  margin-top: 14px;
  font-size: 17px;
  font-weight: 300;
  line-height: 33px;
  color: #222;
}

.para b {
  font-size: 15px;
  font-weight: 400;
  line-height: 20px;
  color: #000;
}

.para u {
  text-decoration: underline wavy #e33 1px;
}

.line {
  display: block;
  white-space: nowrap;
  text-align-last: justify;
}

.first {
  padding-left: 36px;
}

.last {
  text-align-last: left;
}

.mark::after {
  content: "↵";
  font-family: "DejaVu Sans", sans-serif;
  font-size: 10px;
  font-weight: 400;
  line-height: 10px;
  color: #777;
}

.data {
  width: 816px;
  margin: 9px 0 0 -4px;
  table-layout: fixed;
  border-collapse: collapse;
  font-size: 15px;
}

.data caption {
  padding-right: 68px;
  margin-bottom: 1px;
  font-size: 18px;
  font-weight: 500;
  line-height: 25px;
}

.name { width: 138px; }
.mid { width: 76px; }
.slim { width: 70px; }
.wide { width: 82px; }
.tail { width: 10px; }

.data th, .data td {
  height: 28px;
  padding-right: 1px;
  text-align: right;
  font-weight: 400;
  line-height: 20px;
  white-space: nowrap;
}

.data thead th {
  height: 30px;
  background: #9bbb59;
  border-top: 3px solid #000;
  border-bottom: 3px solid #000;
}

.data tr th:first-child {
  font-size: 18px;
  font-weight: 300;
  background: #9bbb59;
}

.data .shaded td:not(.row-end) {
  background: #d9d9d9;
}

.data tbody tr:last-child > :not(.row-end) {
  border-bottom: 3px solid #000;
}

.source {
  padding-top: 2px;
  margin-right: -7px;
  font-size: 18px;
  font-weight: 500;
  line-height: 24px;
  text-align: right;
}

.source span {
  font-family: "DejaVu Serif", serif;
  font-size: 17px;
  font-weight: 400;
}

/* chart */
.chart-frame {
  position: relative;
  margin: 16px 6px 0 -7px;
  padding: 5px;
  background: #f1f1f1;
  border: 2px solid #d9d9d9;
  border-radius: 6px;
}

.chart-border {
  border: 1px solid #a0a0a0;
}

.chart {
  display: grid;
  grid-template-columns: 67px 1fr 110px;
  grid-template-rows: 360px 42px;
  padding-top: 16px;
  background: #fff;
  border-radius: 10px;
  box-shadow: 0 0 0 1px #b5b5b5;
  font-size: 15px;
}

.axis {
  display: flex;
  flex-direction: column;
  justify-content: space-between;
  margin: -9px 0;
  padding-right: 14px;
  line-height: 18px;
  text-align: right;
}

.plot {
  position: relative;
  display: grid;
  border: 1px solid #868686;
  border-bottom-width: 2px;
}

.gridlines, .series {
  grid-area: 1 / 1;
}

.gridlines {
  display: grid;
  grid-template-rows: repeat(7, 1fr);
  margin-left: -6px;
}

.gridlines i + i {
  border-top: 1px solid #868686;
}

.series {
  display: grid;
  grid-template-columns: 1fr 1fr;
}

.columns {
  display: flex;
  align-items: flex-end;
  padding: 0 19px;
}

.columns i {
  flex: 1;
}

.c1 { background: #4573a7; }
.c2 { background: #aa4644; }
.c3 { background: #89a54e; }
.c4 { background: #71588f; }
.c5 { background: #4298af; }
.c6 { background: #db843d; }
.c7 { background: #93a9d0; }
.c8 { background: #d19392; }
.c9 { background: #b9cd96; }

.handle {
  position: absolute;
  left: calc(50% - 4px);
  top: calc(50% - 4px);
  width: 8px;
  height: 8px;
  background: #d4f4f8;
  border: 1px solid #5f86ab;
}

.round {
  width: 9px;
  height: 9px;
  border-radius: 50%;
  border-color: #5a6a78;
}

.handle.n { top: -5px; }
.handle.s { top: calc(100% - 4px); }
.handle.w { left: -5px; }
.handle.e { left: calc(100% - 4px); }

.tip {
  position: absolute;
  left: 80%;
  top: 213px;
  padding: 0 8px 0 4px;
  font-family: var(--ui);
  line-height: 23px;
  color: #555;
  background: #fff;
  border: 1px solid #767676;
  box-shadow: 3px 3px 2px #888;
}

.legend {
  display: flex;
  flex-direction: column;
  padding: 56px 0 0 26px;
  list-style: none;
}

.legend li {
  display: flex;
  align-items: center;
  gap: 4px;
  height: 30px;
}

.legend i {
  width: 9px;
  height: 9px;
}

.categories {
  display: grid;
  grid-column: 2;
  grid-template-columns: 1fr 1fr;
  font-size: 17px;
  font-weight: 300;
  line-height: 40px;
  text-align: center;
}

.grip {
  position: absolute;
}

.top, .bottom {
  left: calc(50% - 7px);
  width: 14px;
  height: 2px;
  background: repeating-linear-gradient(to right, #aaa 0 2px, transparent 2px 4px);
}

.left, .right {
  top: calc(50% - 7px);
  width: 2px;
  height: 14px;
  background: repeating-linear-gradient(#aaa 0 2px, transparent 2px 4px);
}

.top { top: 1px; }
.bottom { bottom: 1px; }
.left { left: 1px; }
.right { right: 1px; }

.after {
  margin-top: 18px;
}

/* scroll bar */
.scrollbar {
  display: flex;
  flex-direction: column;
  align-items: center;
  grid-area: 1 / 3 / 3 / 4;
  background: #dde1e8;
}

.split {
  width: 12px;
  height: 2px;
  margin: 3px 0 2px;
  background: #777c85;
}

.ruler-toggle {
  display: flex;
  justify-content: center;
  align-items: center;
  width: 21px;
  height: 21px;
  margin-bottom: 8px;
  border: 1px solid #878c94;
}

.track {
  flex: 1;
  padding-top: 212px;
}

.thumb {
  display: flex;
  justify-content: center;
  align-items: center;
  width: 19px;
  height: 21px;
  background: #f2f4f7;
  border: 1px solid #8b919b;
}

.browse {
  display: flex;
  flex-direction: column;
  align-items: center;
  justify-content: space-around;
  width: 100%;
  height: 64px;
  margin-top: 7px;
  border-top: 1px solid #aab0ba;
}

/* status bar */
.status {
  display: flex;
  height: 27px;
  background: linear-gradient(#e6e9ee, #bfc4ca);
  border-top: 2px solid #8f949f;
}

.status > button {
  padding: 0 10px 2px 9px;
  line-height: 22px;
  border-right: 1px solid #8b9098;
}

.status > .lang {
  display: flex;
  align-items: center;
  gap: 17px;
}

.views {
  display: flex;
  align-items: center;
  gap: 9px;
  margin-left: auto;
  padding-left: 4px;
  border-left: 1px solid #8b9098;
}

.views .on {
  margin-right: -3px;
  padding: 5px 4px;
  background: #ffd96e;
  border: 1px solid #c79a3c;
  border-radius: 3px;
}

.zoom {
  padding: 0 1px 2px 5px;
}

.ime {
  display: flex;
  align-items: center;
  gap: 8px;
  width: 190px;
  height: 27px;
  margin-top: -2px;
  padding-left: 5px;
  background: #fff;
  color: #000;
  font-size: 18px;
  font-weight: 700;
  line-height: 20px;
}

.ime-grip {
  width: 2px;
  height: 24px;
  background: repeating-linear-gradient(#bbb 0 2px, transparent 2px 5px);
}

.boxed {
  width: 20px;
  height: 20px;
  font-size: 15px;
  line-height: 16px;
  font-weight: 500;
  border: 1px solid #888;
}

.ime-more {
  margin-left: 5px;
}

/* taskbar */
.taskbar {
  position: relative;
  display: flex;
  height: 50px;
  background: linear-gradient(to right, #d6d6d6 35%, #e8d9d2 45%, #e8dad3 60%, #e2d5d3 75%, #d9d8d8 85%, #ded6d5);
}

.start {
  display: flex;
  justify-content: center;
  align-items: center;
  width: 61px;
}

.search {
  display: flex;
  align-items: center;
  gap: 15px;
  width: 428px;
  margin: 1px 0;
  padding-left: 14px;
  background: #fff;
}

.search input {
  flex: 1;
  border: none;
  outline: none;
  font-family: var(--ui);
  font-size: 19px;
}

.search input::placeholder {
  color: #333;
}

.task {
  display: flex;
  justify-content: center;
  align-items: center;
  width: 62px;
}

.open {
  background: linear-gradient(#0078d7, #0078d7) 50% 100% / 51px 3px no-repeat;
}

.current {
  background: linear-gradient(#0078d7, #0078d7) 50% 100% / 62px 3px no-repeat, #f3eeeb;
}

.tray {
  display: flex;
  align-items: center;
  gap: 12px;
  margin-left: auto;
  padding-right: 30px;
}

.power {
  position: relative;
  width: 44px;
  height: 22px;
  margin-right: 4px;
  text-align: center;
  font-size: 13px;
  line-height: 18px;
  color: #fff;
  background: linear-gradient(to right, #149a4a 55%, #8a8a8a 55%);
  border: 2px solid #fff;
  border-radius: 3px;
  outline: 1px solid #777;
}

.power i {
  position: absolute;
  right: -3px;
  top: -5px;
  width: 10px;
  height: 10px;
  border-radius: 50%;
  background: #ee6060;
}

.clock {
  display: flex;
  flex-direction: column;
  align-items: center;
  padding: 0 14px 2px 2px;
  line-height: 24px;
  color: #000;
}

.notice {
  position: relative;
}

.notice span {
  position: absolute;
  left: 10px;
  top: 9px;
  width: 20px;
  height: 20px;
  border: 1px solid #777;
  border-radius: 50%;
  background: #d9d5d4;
  text-align: center;
  font-size: 15px;
  line-height: 18px;
  color: #000;
}

.watermark {
  position: absolute;
  right: 11px;
  top: 20px;
  font-family: "Liberation Sans", sans-serif;
  font-size: 16px;
  line-height: 20px;
  color: rgba(255, 255, 255, 0.7);
  text-shadow: 0 0 2px rgba(0, 0, 0, 0.3);
}
```
